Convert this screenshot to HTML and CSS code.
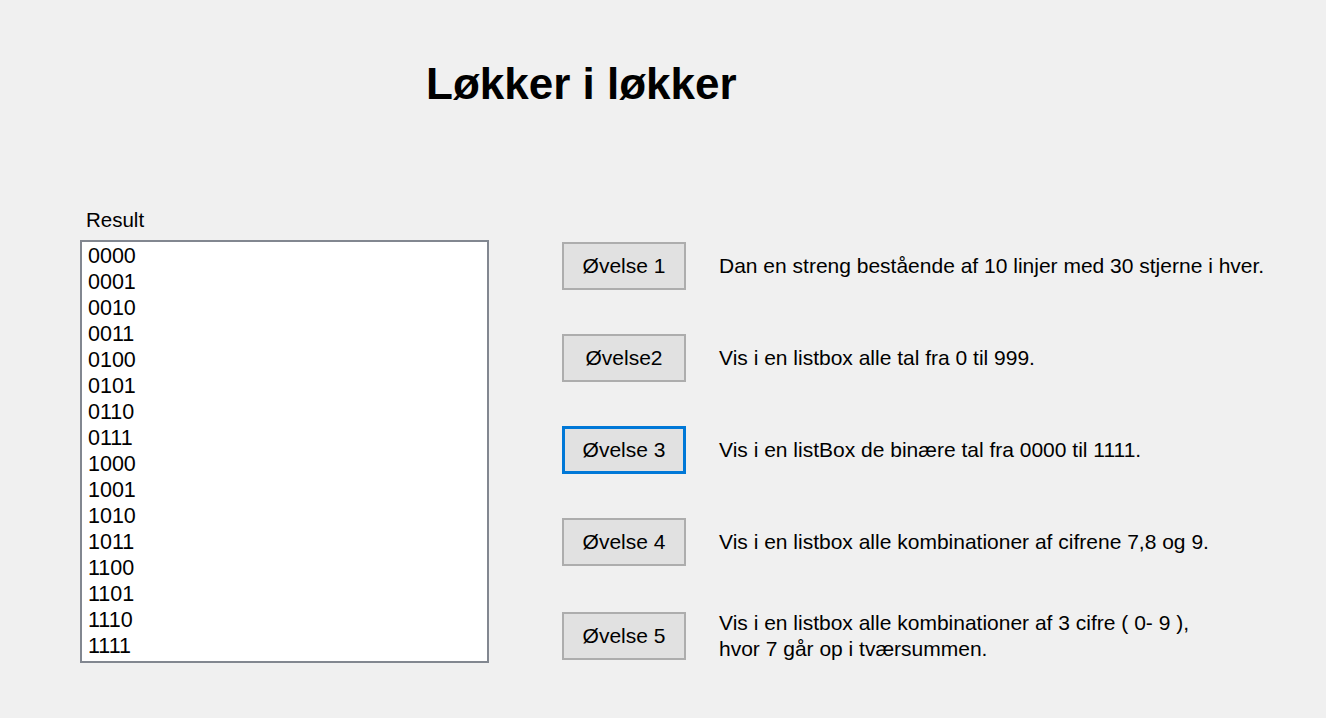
FILE: index.html
```html
<!DOCTYPE html>
<html lang="da">
<head>
<meta charset="utf-8">
<title>Løkker i løkker</title>
<link rel="stylesheet" href="styles.css">
</head>
<body>
<div class="form">
  <h1 class="title">Løkker i løkker</h1>
  <div class="main">
    <div class="left">
      <div class="label">Result</div>
      <div class="listbox">
        <div class="item">0000</div>
        <div class="item">0001</div>
        <div class="item">0010</div>
        <div class="item">0011</div>
        <div class="item">0100</div>
        <div class="item">0101</div>
        <div class="item">0110</div>
        <div class="item">0111</div>
        <div class="item">1000</div>
        <div class="item">1001</div>
        <div class="item">1010</div>
        <div class="item">1011</div>
        <div class="item">1100</div>
        <div class="item">1101</div>
        <div class="item">1110</div>
        <div class="item">1111</div>
      </div>
    </div>
    <div class="right">
      <div class="row">
        <button class="btn">Øvelse 1</button>
        <div class="desc">Dan en streng bestående af 10 linjer med 30 stjerne i hver.</div>
      </div>
      <div class="row">
        <button class="btn">Øvelse2</button>
        <div class="desc">Vis i en listbox alle tal fra 0 til 999.</div>
      </div>
      <div class="row">
        <button class="btn focused">Øvelse 3</button>
        <div class="desc">Vis i en listBox de binære tal fra 0000 til 1111.</div>
      </div>
      <div class="row">
        <button class="btn">Øvelse 4</button>
        <div class="desc">Vis i en listbox alle kombinationer af cifrene 7,8 og 9.</div>
      </div>
      <div class="row">
        <button class="btn">Øvelse 5</button>
        <div class="desc">Vis i en listbox alle kombinationer af 3 cifre ( 0- 9 ),<br>hvor 7 går op i tværsummen.</div>
      </div>
    </div>
  </div>
</div>
</body>
</html>
```

FILE: styles.css
```css
html, body {
  margin: 0;
  padding: 0;
  background: #f0f0f0;
}
body {
  width: 1326px;
  height: 718px;
  overflow: hidden;
  color: #000;
  font-family: "Liberation Sans", Arial, sans-serif;
}
.form {
  padding-top: 62px;
}
.title {
  margin: 0 0 0 426px;
  font-weight: bold;
  font-size: 44px;
  line-height: 44px;
}
.main {
  display: flex;
  align-items: flex-start;
  margin-top: 99px;
  padding-left: 80px;
}
.left {
  display: flex;
  flex-direction: column;
  width: 409px;
}
.label {
  font-size: 20.5px;
  line-height: 30px;
  padding-left: 6px;
  margin-bottom: 5px;
}
.listbox {
  box-sizing: border-box;
  width: 409px;
  height: 423px;
  border: 2px solid #828790;
  background: #fff;
  padding: 1px 0 0 6px;
  font-size: 21.5px;
  line-height: 26px;
}
.right {
  display: flex;
  flex-direction: column;
  gap: 44px;
  margin-top: 37px;
  margin-left: 73px;
}
.row {
  display: flex;
  align-items: center;
  gap: 33px;
}
.btn {
  box-sizing: border-box;
  width: 124px;
  height: 48px;
  flex: none;
  margin: 0;
  padding: 0;
  background: #e1e1e1;
  border: 2px solid #adadad;
  font-family: "Liberation Sans", Arial, sans-serif;
  font-size: 21px;
  color: #000;
}
.btn.focused {
  border: 3px solid #0078d7;
}
.desc {
  font-size: 21px;
  line-height: 26px;
  white-space: nowrap;
}
```
